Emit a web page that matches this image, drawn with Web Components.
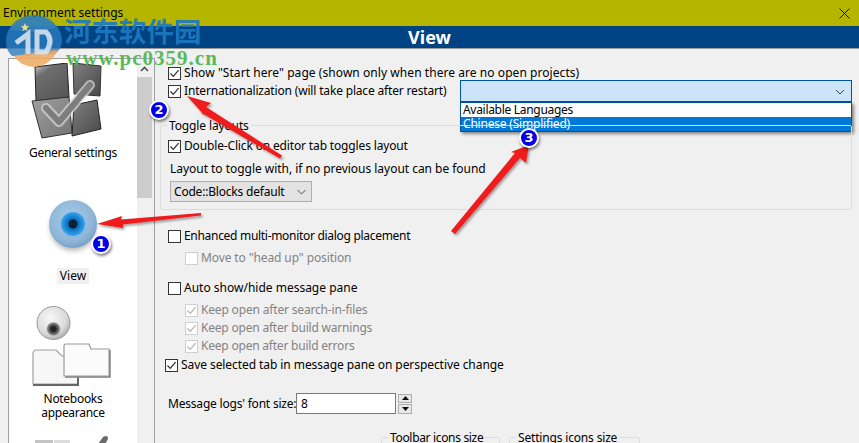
<!DOCTYPE html>
<html>
<head>
<meta charset="utf-8">
<title>Environment settings</title>
<style>
  html, body { margin: 0; height: 443px; overflow: hidden; background: #f0f0f0; }
  body { font: 12px/18px "Noto Sans", sans-serif; color: #000; }
</style>
</head>
<body>
<env-dialog>
  <title-bar slot="title" caption="Environment settings"></title-bar>
  <section-head slot="head">View</section-head>
  <side-list slot="side">
    <side-item style="--top:4px; --gap:7px; letter-spacing:-.25px">
      <svg slot="icon" width="80" height="76" viewBox="0 0 80 76" style="margin-left:-10px">
        <defs>
          <linearGradient id="cube" x1="0" y1="0" x2="1" y2="1"><stop offset="0" stop-color="#808080"/><stop offset="1" stop-color="#484848"/></linearGradient>
          <linearGradient id="cubeLit" x1="0" y1="0" x2="0.6" y2="1"><stop offset="0" stop-color="#d8d8d8"/><stop offset=".3" stop-color="#6e6e6e"/><stop offset="1" stop-color="#585858"/></linearGradient>
          <linearGradient id="cubeLow" x1="0" y1="0" x2="1" y2="1"><stop offset="0" stop-color="#a0a0a0"/><stop offset="1" stop-color="#747474"/></linearGradient>
        </defs>
        <path d="M7 4 L39 0 L41 34 L8 38 Z" fill="url(#cubeLit)" stroke="#222" stroke-width="1"/>
        <path d="M45 0 L73 3 L72 33 L46 31 Z" fill="url(#cube)" stroke="#333" stroke-width="1"/>
        <path d="M4 38 L41 34 L44 70 L14 75 Z" fill="url(#cubeLow)" stroke="#333" stroke-width="1"/>
        <path d="M46 42 L69 37 L73 66 L44 73 Z" fill="url(#cube)" stroke="#222" stroke-width="1"/>
        <path d="M18 45 L31 59 L62 22" fill="none" stroke="#d4d4d4" stroke-width="10" stroke-linecap="round" stroke-linejoin="round" opacity=".75"/>
        <path d="M18 45 L31 59 L62 22" fill="none" stroke="#7d7d7d" stroke-width="6" stroke-linecap="round" stroke-linejoin="round"/>
      </svg>
      General settings
    </side-item>
    <side-item current style="--top:38px; --gap:8px">
      <svg slot="icon" width="56" height="62" viewBox="0 0 56 62">
        <defs>
          <radialGradient id="ball" cx=".45" cy=".4" r=".65"><stop offset="0" stop-color="#a9cbe6"/><stop offset=".7" stop-color="#8fb6d8"/><stop offset="1" stop-color="#6f9dc4"/></radialGradient>
          <radialGradient id="iris" cx=".5" cy=".5" r=".5"><stop offset=".3" stop-color="#0b5ea8"/><stop offset=".75" stop-color="#1f8fe0"/><stop offset="1" stop-color="#3aa4ea"/></radialGradient>
          <filter id="soft" x="-30%" y="-30%" width="160%" height="160%"><feGaussianBlur stdDeviation="2.5"/></filter>
        </defs>
        <ellipse cx="28" cy="30" rx="23" ry="23" fill="#777" opacity=".5" filter="url(#soft)"/>
        <circle cx="28" cy="26" r="24" fill="url(#ball)"/>
        <circle cx="28" cy="26" r="12" fill="url(#iris)"/>
        <circle cx="28" cy="26" r="4.5" fill="#0a2238"/>
      </svg>
      <span style="display:inline-block; padding:1px 3px; background:#f0f0f0">View</span>
    </side-item>
    <side-item style="--top:22px; --gap:4px; letter-spacing:-.3px">
      <svg slot="icon" width="84" height="82" viewBox="0 0 84 82">
        <defs>
          <radialGradient id="pale" cx=".4" cy=".35" r=".7"><stop offset="0" stop-color="#f8f8f8"/><stop offset=".7" stop-color="#dadada"/><stop offset="1" stop-color="#a8a8a8"/></radialGradient>
          <radialGradient id="pupil" cx=".5" cy=".5" r=".5"><stop offset=".3" stop-color="#222"/><stop offset=".8" stop-color="#888"/><stop offset="1" stop-color="#bbb" stop-opacity="0"/></radialGradient>
        </defs>
        <circle cx="22.5" cy="17" r="16.5" fill="url(#pale)" stroke="#999" stroke-width="1"/>
        <circle cx="22.5" cy="23" r="7.5" fill="url(#pupil)"/>
        <path d="M2 78 V48 Q2 44 6 44 H25 L31 50 H47 V78 Z" fill="#f7f7f7" stroke="#a0a0a0" stroke-width="1.2"/>
        <path d="M2 79 H47 V72" fill="none" stroke="#666" stroke-width="2"/>
        <path d="M33 70 V40 Q33 38 35 38 H58 L60 43 H78 V70 Z" fill="#fbfbfb" stroke="#9a9a9a" stroke-width="1.2"/>
        <path d="M34 71 H79 V44" fill="none" stroke="#808080" stroke-width="1.5"/>
      </svg>
      Notebooks<br>appearance
    </side-item>
    <side-item style="--top:15px; --gap:0px">
      <svg slot="icon" width="80" height="40" viewBox="0 0 80 40">
        <rect x="2" y="5" width="18" height="30" fill="#c4c4c4"/>
        <rect x="21" y="5" width="16" height="30" fill="#dcdcdc"/>
        <path d="M60 16 L70 2 Q75 -1 75 4 L66 20 Z" fill="#6a6a6a"/>
      </svg>
    </side-item>
  </side-list>

  <check-row checked style="margin-left:13px; letter-spacing:.06px">Show "Start here" page (shown only when there are no open projects)</check-row>
  <div style="display:flex; align-items:flex-start; height:18px; margin-left:13px">
    <check-row checked style="flex:none; width:292px; letter-spacing:-.17px">Internationalization (will take place after restart)</check-row>
    <combo-box>
      <span style="letter-spacing:-.3px">Available Languages</span>
      <span style="letter-spacing:-.2px">Chinese (Simplified)</span>
    </combo-box>
  </div>
  <group-box caption="Toggle layouts" style="margin:25px 7px 0 5px; height:85px; letter-spacing:-.13px">
    <check-row checked style="margin:2px 0 0 7px; letter-spacing:-.15px">Double-Click on editor tab toggles layout</check-row>
    <div style="margin:5px 0 0 9px; letter-spacing:-.03px">Layout to toggle with, if no previous layout can be found</div>
    <select-box style="margin:3px 0 0 9px; letter-spacing:-.2px">Code::Blocks default</select-box>
  </group-box>
  <check-row style="margin:17px 0 0 13px; letter-spacing:-.3px">Enhanced multi-monitor dialog placement</check-row>
  <check-row disabled style="margin:4px 0 0 30px; letter-spacing:-.11px">Move to "head up" position</check-row>
  <check-row style="margin:12px 0 0 13px">Auto show/hide message pane</check-row>
  <check-row checked disabled style="margin:4px 0 0 30px; letter-spacing:-.17px">Keep open after search-in-files</check-row>
  <check-row checked disabled style="margin:0 0 0 30px; letter-spacing:-.2px">Keep open after build warnings</check-row>
  <check-row checked disabled style="margin:0 0 0 30px; letter-spacing:-.21px">Keep open after build errors</check-row>
  <check-row checked style="margin:1px 0 0 10px; letter-spacing:-.07px">Save selected tab in message pane on perspective change</check-row>
  <spin-input caption="Message logs' font size:" value="8" style="margin:19px 0 0 13px"></spin-input>
  <div style="display:flex; gap:9px; margin:23px 0 0 226px">
    <group-box caption="Toolbar icons size" style="width:119px; height:60px; letter-spacing:-.33px"></group-box>
    <group-box caption="Settings icons size" style="width:131px; height:60px; letter-spacing:-.17px"></group-box>
  </div>

  <site-mark slot="overlay"></site-mark>
  <note-arrows slot="overlay"></note-arrows>
  <note-badge slot="overlay" style="left:91px; top:234px">1</note-badge>
  <note-badge slot="overlay" style="left:149px; top:100px">2</note-badge>
  <note-badge slot="overlay" style="left:519px; top:128px">3</note-badge>
</env-dialog>

<script>
// Outer frame of the dialog
class EnvDialog extends HTMLElement {
  constructor() {
    super();
    this.attachShadow({ mode: 'open' });
    this.shadowRoot.innerHTML = `
      <style>
        :host { display: block; position: relative; width: 859px; height: 443px; overflow: hidden; }
        .body { display: flex; height: 394px; }
        .side { flex: none; width: 155px; padding: 9px 0 0 8px; box-sizing: border-box; }
        .form { flex: 1; padding-top: 15px; min-width: 0; }
      </style>
      <slot name="title"></slot>
      <slot name="head"></slot>
      <div class="body">
        <div class="side"><slot name="side"></slot></div>
        <div class="form"><slot></slot></div>
      </div>
      <slot name="overlay"></slot>
    `;
  }
}

class TitleBar extends HTMLElement {
  constructor() {
    super();
    this.attachShadow({ mode: 'open' });
    this.shadowRoot.innerHTML = `
      <style>
        :host { display: flex; align-items: center; justify-content: space-between; height: 26px; background: #b5b500; padding: 0 9px 0 3px; }
        span { font-size: 12px; line-height: 26px; }
        svg { display: block; }
      </style>
      <span></span>
      <svg width="11" height="11" viewBox="0 0 11 11"><path d="M.5 .5 L10.5 10.5 M10.5 .5 L.5 10.5" stroke="#111" stroke-width="1" fill="none"/></svg>
    `;
    this.shadowRoot.querySelector('span').textContent = this.getAttribute('caption');
  }
}

class SectionHead extends HTMLElement {
  constructor() {
    super();
    this.attachShadow({ mode: 'open' });
    this.shadowRoot.innerHTML = `
      <style>
        :host { display: block; height: 22px; background: #004383; border-bottom: 1px solid #9a9a9a; color: #fff; text-align: center; font: bold 18px/23px "Noto Sans", sans-serif; overflow: hidden; }
      </style>
      <slot></slot>
    `;
  }
}

class SideList extends HTMLElement {
  constructor() {
    super();
    this.attachShadow({ mode: 'open' });
    this.shadowRoot.innerHTML = `
      <style>
        :host { display: flex; height: 420px; border: 1px solid #a0a0a0; border-bottom: 0; background: #fff; box-sizing: border-box; }
        .items { flex: none; width: 128px; }
        .bar { flex: none; width: 15px; background: #f0f0f0; }
        .bar svg { display: block; margin: 7px auto 0; }
        .thumb { height: 121px; margin-top: 5px; background: #cdcdcd; }
        .edge { flex: none; width: 2px; background: #f0f0f0; }
      </style>
      <div class="items"><slot></slot></div>
      <div class="bar">
        <svg width="9" height="6" viewBox="0 0 9 6"><path d="M1 5 L4.5 1.5 L8 5" fill="none" stroke="#505050" stroke-width="1.6"/></svg>
        <div class="thumb"></div>
      </div>
      <div class="edge"></div>
    `;
  }
}

class SideItem extends HTMLElement {
  constructor() {
    super();
    this.attachShadow({ mode: 'open' });
    this.shadowRoot.innerHTML = `
      <style>
        :host { display: flex; flex-direction: column; align-items: center; text-align: center; font-size: 12px; line-height: 14px; padding-top: var(--top, 0); }
        .pic { display: flex; justify-content: center; }
        .text { margin-top: var(--gap, 0); }
      </style>
      <div class="pic"><slot name="icon"></slot></div>
      <div class="text"><slot></slot></div>
    `;
  }
}

class CheckRow extends HTMLElement {
  constructor() {
    super();
    this.attachShadow({ mode: 'open' });
    this.shadowRoot.innerHTML = `
      <style>
        :host { display: block; font-size: 12px; line-height: 18px; height: 18px; white-space: nowrap; }
        label { display: flex; align-items: center; gap: 3px; height: 18px; }
        .box { flex: none; width: 11px; height: 11px; border: 1px solid #333; background: #fff; display: block; }
        :host([disabled]) { color: #838383; }
        :host([disabled]) .box { border-color: #cfcfcf; }
        svg { display: none; width: 11px; height: 11px; }
        :host([checked]) svg { display: block; }
        path { fill: none; stroke: #333; stroke-width: 1.3; }
        :host([disabled]) path { stroke: #b5b5b5; }
      </style>
      <label>
        <span class="box"><svg viewBox="0 0 11 11"><path d="M1.5 5.5 L4.3 8.4 L9.6 2.2"/></svg></span>
        <span><slot></slot></span>
      </label>
    `;
  }
}

class GroupBox extends HTMLElement {
  constructor() {
    super();
    this.attachShadow({ mode: 'open' });
    this.shadowRoot.innerHTML = `
      <style>
        :host { display: block; box-sizing: border-box; position: relative; border: 1px solid #dcdcdc; border-radius: 2px; }
        .caption { position: absolute; left: 6px; top: -9px; height: 18px; padding: 0 2px; background: #f0f0f0; line-height: 18px; white-space: nowrap; }
        .inner { padding-top: 9px; }
      </style>
      <div class="caption"></div>
      <div class="inner"><slot></slot></div>
    `;
    this.shadowRoot.querySelector('.caption').textContent = this.getAttribute('caption');
  }
}

class ComboBox extends HTMLElement {
  constructor() {
    super();
    this.attachShadow({ mode: 'open' });
    this.shadowRoot.innerHTML = `
      <style>
        :host { display: block; position: relative; flex: none; width: 392px; height: 22px; box-sizing: border-box; border: 1px solid #00549c; background: #cce4f7; margin-top: -2px; }
        svg { position: absolute; right: 6px; top: 8px; }
        .drop { position: absolute; left: -1px; top: 21px; width: 392px; height: 30px; box-sizing: border-box; border: 1px solid #00549c; background: #fff; box-shadow: 2px 2px 3px rgba(0,0,0,.45); }
        ::slotted(span) { display: block; height: 14px; line-height: 14px; padding-left: 2px; }
        ::slotted(span:last-child) { background: #0078d7; color: #fff; }
      </style>
      <svg width="10" height="6" viewBox="0 0 10 6"><path d="M1 1 L5 5 L9 1" fill="none" stroke="#444" stroke-width="1"/></svg>
      <div class="drop"><slot></slot></div>
    `;
  }
}

class SelectBox extends HTMLElement {
  constructor() {
    super();
    this.attachShadow({ mode: 'open' });
    this.shadowRoot.innerHTML = `
      <style>
        :host { display: flex; align-items: center; justify-content: space-between; width: 142px; height: 21px; box-sizing: border-box; border: 1px solid #adadad; background: #e3e3e3; padding: 0 5px 0 3px; }
      </style>
      <span><slot></slot></span>
      <svg width="9" height="6" viewBox="0 0 9 6"><path d="M.5 1 L4.5 5 L8.5 1" fill="none" stroke="#555" stroke-width="1"/></svg>
    `;
  }
}

class SpinInput extends HTMLElement {
  constructor() {
    super();
    this.attachShadow({ mode: 'open' });
    this.shadowRoot.innerHTML = `
      <style>
        :host { display: flex; align-items: center; height: 21px; white-space: nowrap; }
        .cap { flex: none; width: 127px; letter-spacing: -.2px; }
        .val { width: 100px; height: 21px; box-sizing: border-box; border: 1px solid #7a7a7a; background: #fff; padding-left: 4px; line-height: 19px; margin-left: 1px; }
        .spin { display: flex; flex-direction: column; gap: 1px; margin-left: 2px; }
        .spin div { width: 14px; height: 9px; box-sizing: border-box; border: 1px solid #adadad; background: #e8e8e8; display: flex; align-items: center; justify-content: center; }
        .spin .down { height: 10px; }
      </style>
      <span class="cap"></span>
      <div class="val"></div>
      <div class="spin">
        <div><svg width="7" height="4" viewBox="0 0 7 4"><path d="M3.5 0 L7 4 H0 Z" fill="#111"/></svg></div>
        <div class="down"><svg width="7" height="4" viewBox="0 0 7 4"><path d="M0 0 H7 L3.5 4 Z" fill="#111"/></svg></div>
      </div>
    `;
    this.shadowRoot.querySelector('.cap').textContent = this.getAttribute('caption');
    this.shadowRoot.querySelector('.val').textContent = this.getAttribute('value');
  }
}

// Watermark of the site that published the screenshot
class SiteMark extends HTMLElement {
  constructor() {
    super();
    this.attachShadow({ mode: 'open' });
    this.shadowRoot.innerHTML = `
      <style>
        :host { display: block; position: absolute; left: 0; top: 0; width: 210px; height: 72px; pointer-events: none; }
        svg { position: absolute; left: 4px; top: 12px; }
        .cn { position: absolute; left: 64px; top: 14px; font: bold 27.5px/32px "Noto Sans CJK SC", sans-serif; color: #1c7ac2; opacity: .9; white-space: nowrap; }
        .url { position: absolute; left: 66px; top: 46px; font: bold 21px/24px "Liberation Serif", serif; letter-spacing: 1px; color: #5cb85c; white-space: nowrap; }
      </style>
      <svg width="60" height="56" viewBox="0 0 60 56">
        <path d="M6 18 A28 28 0 0 1 52 16 L30 20 Z" fill="#5c9a8c" opacity=".75"/>
        <path d="M2 30 A28 26 0 0 1 58 28 Q58 38 50 42 L8 44 Q2 38 2 30 Z" fill="#2a7cc0" opacity=".8"/>
        <path d="M10 44 Q30 40 54 38 Q46 54 30 55 Q16 54 10 44 Z" fill="#f0a860" opacity=".85"/>
        <path d="M12 31 L24 22 V42 M33 20 H42 Q50 28 42 40 H33 Z" fill="none" stroke="#dfe9f2" stroke-width="5" opacity=".85"/>
        <path d="M21 11 l1.2 3 3 .3 -2.4 2 .8 3 -2.6 -1.7 -2.6 1.7 .8 -3 -2.4 -2 3 -.3 Z" fill="#e6e08c"/>
      </svg>
      <div class="cn">河东软件园</div>
      <div class="url">www.pc0359.cn</div>
    `;
  }
}

// Red arrows drawn over the screenshot
class NoteArrows extends HTMLElement {
  constructor() {
    super();
    this.attachShadow({ mode: 'open' });
    this.shadowRoot.innerHTML = `
      <style>
        :host { display: block; position: absolute; left: 0; top: 0; width: 859px; height: 443px; pointer-events: none; }
        svg { display: block; }
      </style>
      <svg width="859" height="443" viewBox="0 0 859 443">
        <defs><filter id="sh" x="-10%" y="-30%" width="120%" height="160%"><feDropShadow dx="1.5" dy="2" stdDeviation="1.2" flood-color="#000" flood-opacity=".35"/></filter></defs>
        <g fill="#ee1c1c" filter="url(#sh)">
          <path d="M97 224 L122 216 L121 219.5 L201 213 L201 215.5 L123 224.5 L123 228 Z"/>
          <path d="M187 96 L211 103 L206 107 L282 155.5 L280 158.5 L200 112 L205 116 Z"/>
          <path d="M529 145 L526 163 L520 158 L455 234 L451 231 L515 153 L511 152 Z"/>
        </g>
      </svg>
    `;
  }
}

class NoteBadge extends HTMLElement {
  constructor() {
    super();
    this.attachShadow({ mode: 'open' });
    this.shadowRoot.innerHTML = `
      <style>
        :host { display: flex; align-items: center; justify-content: center; position: absolute; width: 16px; height: 16px; border: 2px solid #fff; border-radius: 50%; background: #0000e6; color: #fff; font: bold 13px/16px "DejaVu Sans", sans-serif; box-shadow: 1px 2px 3px rgba(0,0,0,.5); }
      </style>
      <slot></slot>
    `;
  }
}

customElements.define('env-dialog', EnvDialog);
customElements.define('title-bar', TitleBar);
customElements.define('section-head', SectionHead);
customElements.define('side-list', SideList);
customElements.define('side-item', SideItem);
customElements.define('check-row', CheckRow);
customElements.define('group-box', GroupBox);
customElements.define('combo-box', ComboBox);
customElements.define('select-box', SelectBox);
customElements.define('spin-input', SpinInput);
customElements.define('site-mark', SiteMark);
customElements.define('note-arrows', NoteArrows);
customElements.define('note-badge', NoteBadge);
</script>
</body>
</html>
